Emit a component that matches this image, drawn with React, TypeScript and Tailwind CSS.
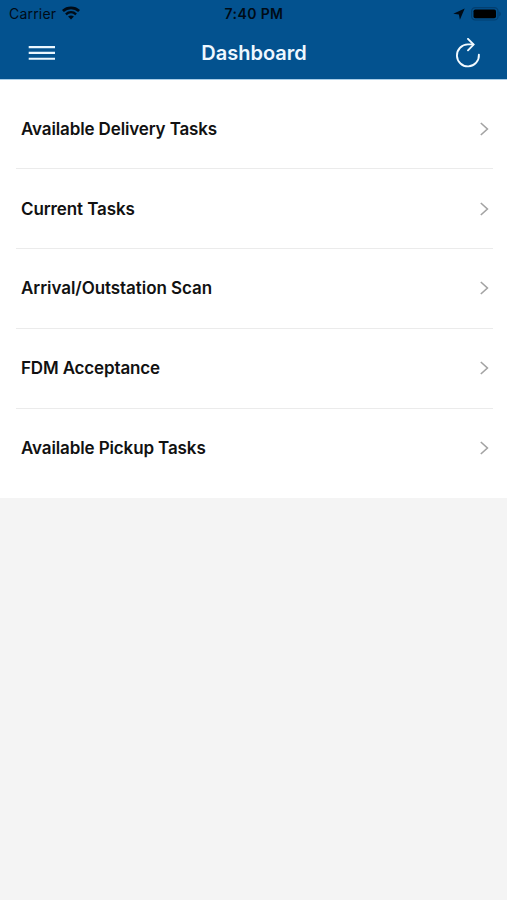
const tasks = [
  { id: 1, label: "Available Delivery Tasks", tracking: "tracking-[-0.13px]" },
  { id: 2, label: "Current Tasks", tracking: "tracking-[-0.1px]" },
  { id: 3, label: "Arrival/Outstation Scan", tracking: "tracking-[-0.06px]" },
  { id: 4, label: "FDM Acceptance", tracking: "tracking-[-0.15px]" },
  { id: 5, label: "Available Pickup Tasks", tracking: "tracking-[-0.12px]" },
];

const WifiIcon = () => (
  <svg className="w-[18px] h-[14px] -mt-0.5" viewBox="0 0 18 14" fill="none" stroke="#000b16">
    <path d="M0.9 5C5.5 0.8 12.5 0.8 17.1 5" strokeWidth="2.8" />
    <path d="M3.9 8.3C6.9 5.6 11.1 5.6 14.1 8.3" strokeWidth="2.4" />
    <path d="M9 13.5L6.1 10.6C7.8 9.1 10.2 9.1 11.9 10.6Z" fill="#000b16" stroke="none" />
  </svg>
);

const LocationIcon = () => (
  <svg className="w-3 h-3" viewBox="0 0 12 12" fill="#000b16">
    <path d="M11.7 0.4L6.9 11.7L5.9 6.5L0.3 5.7Z" />
  </svg>
);

const BatteryIcon = () => (
  <svg className="w-[31px] h-[14px]" viewBox="0 0 31 14">
    <rect x="0.6" y="0.6" width="26.4" height="12.4" rx="3.6" fill="none" stroke="#033f70" strokeWidth="1.2" />
    <rect x="2.5" y="2.5" width="22.5" height="8.8" rx="1.8" fill="#000" />
    <path d="M28.3 4.4C30.2 5.2 30.2 8.4 28.3 9.2Z" fill="#033f70" />
  </svg>
);

const MenuIcon = () => (
  <svg className="w-[27px] h-4" viewBox="0 0 27 16" stroke="#e9f6ff" strokeWidth="2.1">
    <path d="M0.7 2.1H27M0.7 7.9H27M0.7 13.7H27" />
  </svg>
);

const RefreshIcon = () => (
  <svg className="w-[26px] h-[30px]" viewBox="0 0 26 30" fill="none" stroke="#f2faff" strokeWidth="1.9">
    <path d="M23.9 16.6A11 11 0 1 1 12.9 6.4H18" strokeLinecap="round" />
    <path d="M13 0.9L18.6 6.6L13 12.3" strokeLinecap="round" />
  </svg>
);

const ChevronIcon = () => (
  <svg className="w-[9px] h-[14px]" viewBox="0 0 9 14" fill="none" stroke="#a3a3a3" strokeWidth="1.6">
    <path d="M0.8 1L7.4 7L0.8 13" />
  </svg>
);

const StatusBar = () => (
  <div className="grid grid-cols-3 items-center h-[27px] pl-[9px] pr-[5px] text-[#000b16]">
    <div className="flex items-center gap-[6px]">
      <span className="text-[14px] tracking-[0.2px]">Carrier</span>
      <WifiIcon />
    </div>
    <span className="pr-[3px] text-center text-[14px] font-semibold tracking-[0.4px]">7:40 PM</span>
    <div className="flex items-center justify-end gap-[6px]">
      <LocationIcon />
      <BatteryIcon />
    </div>
  </div>
);

const Header = () => (
  <header className="h-[79px] bg-[#03528f]">
    <StatusBar />
    <div className="flex items-center justify-between h-[52px] pl-7 pr-[26px]">
      <button aria-label="Menu">
        <MenuIcon />
      </button>
      <h1 className="pr-[2px] text-[20px] leading-6 font-semibold text-[#eef8ff]">Dashboard</h1>
      <button aria-label="Refresh">
        <RefreshIcon />
      </button>
    </div>
  </header>
);

// Single row of the dashboard list
const TaskRow = ({ label, tracking }: { label: string; tracking: string }) => (
  <li className="flex items-center justify-between h-[79.8px] pl-[5px] pr-1">
    <span className={`text-[17px] leading-6 font-semibold text-[#111111] ${tracking}`}>{label}</span>
    <ChevronIcon />
  </li>
);

const App = () => (
  <div className="min-h-screen bg-[#f4f4f4] font-['Inter',sans-serif]">
    <Header />
    <main className="h-[419px] bg-white border-t border-[#a9cde8] pt-[9.4px] pl-4 pr-[14.5px]">
      <ul className="divide-y-[1.5px] divide-[#ebebeb]">
        {tasks.map((task) => (
          <TaskRow key={task.id} label={task.label} tracking={task.tracking} />
        ))}
      </ul>
    </main>
  </div>
);

export default App;
